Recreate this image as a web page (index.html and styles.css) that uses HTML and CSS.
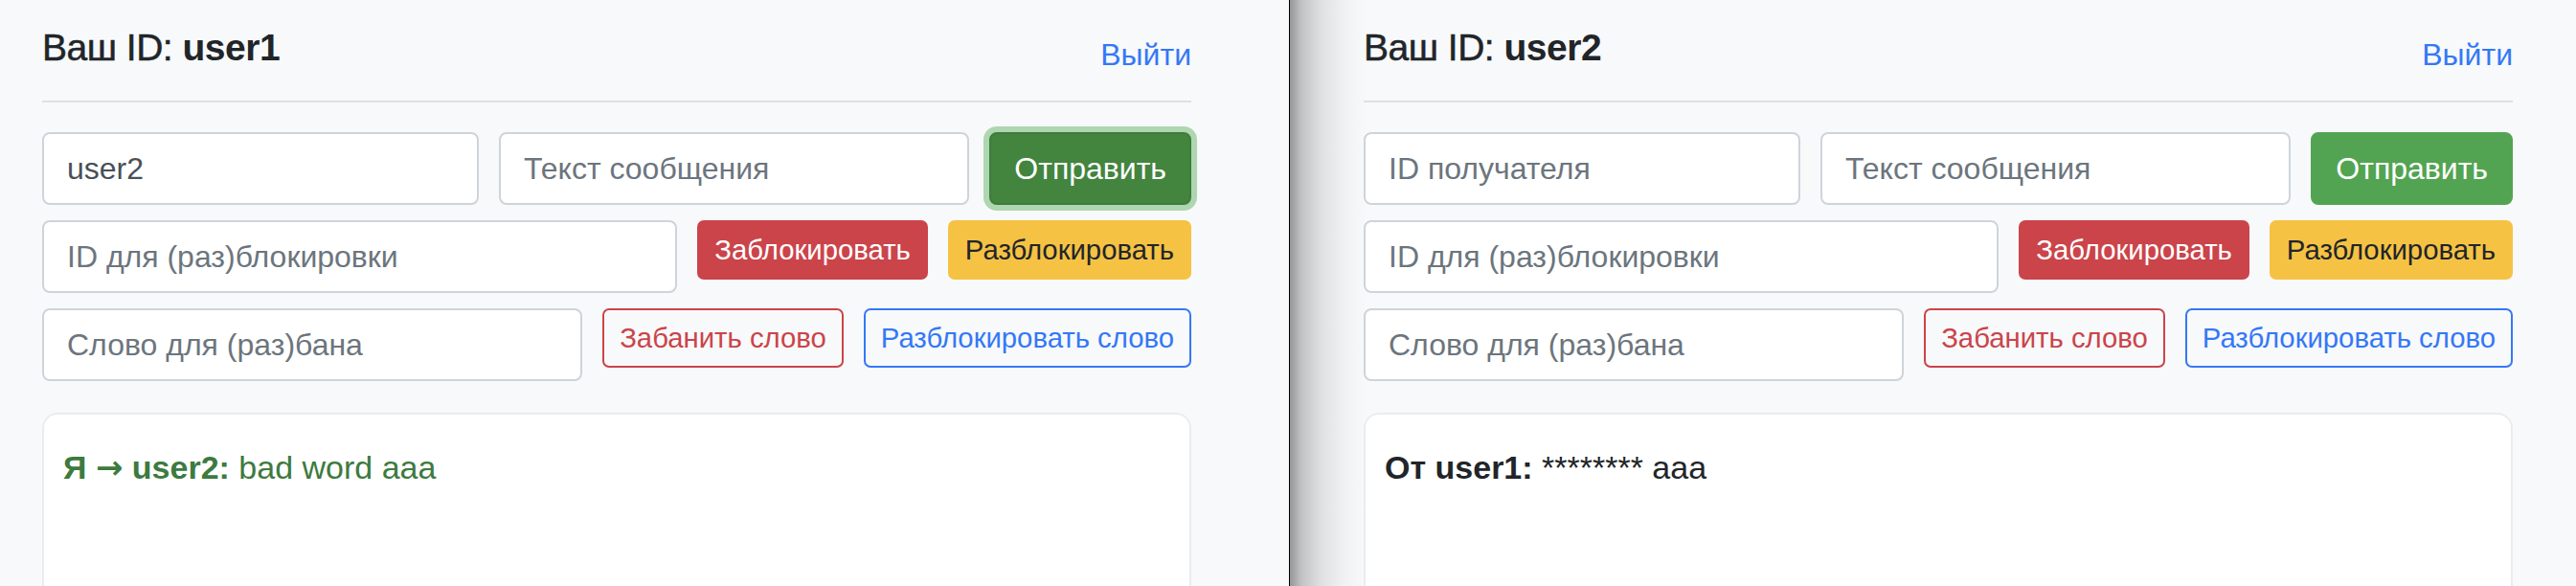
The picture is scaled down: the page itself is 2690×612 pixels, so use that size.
FILE: index.html
```html
<!DOCTYPE html>
<html lang="ru">
<head>
<meta charset="utf-8">
<title>Чат</title>
<link rel="stylesheet" href="styles.css">
</head>
<body>
<div class="screen">
  <section class="win win-left">
    <div class="content">
      <header class="topbar">
        <h4 class="title">Ваш ID: <b>user1</b></h4>
        <a class="logout" href="#">Выйти</a>
      </header>
      <hr class="sep">
      <div class="row row-send">
        <input class="field f-recipient" type="text" value="user2">
        <input class="field f-text" type="text" placeholder="Текст сообщения">
        <button class="btn btn-success is-focused" type="button">Отправить</button>
      </div>
      <div class="row">
        <input class="field f-grow" type="text" placeholder="ID для (раз)блокировки">
        <button class="btn btn-sm btn-danger" type="button">Заблокировать</button>
        <button class="btn btn-sm btn-warning" type="button">Разблокировать</button>
      </div>
      <div class="row">
        <input class="field f-grow" type="text" placeholder="Слово для (раз)бана">
        <button class="btn btn-sm btn-outline-danger" type="button">Забанить слово</button>
        <button class="btn btn-sm btn-outline-primary" type="button">Разблокировать слово</button>
      </div>
      <div class="messages">
        <p class="msg msg-out"><b>Я <span class="arrow">→</span> user2:</b> bad word aaa</p>
      </div>
    </div>
  </section>
  <section class="win win-right">
    <div class="win-shadow"></div>
    <div class="content">
      <header class="topbar">
        <h4 class="title">Ваш ID: <b>user2</b></h4>
        <a class="logout" href="#">Выйти</a>
      </header>
      <hr class="sep">
      <div class="row row-send">
        <input class="field f-recipient" type="text" placeholder="ID получателя">
        <input class="field f-text" type="text" placeholder="Текст сообщения">
        <button class="btn btn-success" type="button">Отправить</button>
      </div>
      <div class="row">
        <input class="field f-grow" type="text" placeholder="ID для (раз)блокировки">
        <button class="btn btn-sm btn-danger" type="button">Заблокировать</button>
        <button class="btn btn-sm btn-warning" type="button">Разблокировать</button>
      </div>
      <div class="row">
        <input class="field f-grow" type="text" placeholder="Слово для (раз)бана">
        <button class="btn btn-sm btn-outline-danger" type="button">Забанить слово</button>
        <button class="btn btn-sm btn-outline-primary" type="button">Разблокировать слово</button>
      </div>
      <div class="messages">
        <p class="msg msg-in"><b>От user1:</b> ******** aaa</p>
      </div>
    </div>
  </section>
</div>
</body>
</html>
```
FILE: styles.css
```css
html, body {
  margin: 0;
  padding: 0;
  height: 612px;
  overflow: hidden;
  background: #f8f9fa;
}

body {
  font-family: "Liberation Sans", Arial, Helvetica, sans-serif;
  color: #212529;
}

.screen {
  display: flex;
  width: 2690px;
  height: 612px;
}

.win {
  position: relative;
  height: 612px;
  background: #f8f9fa;
  overflow: hidden;
}

.win-left {
  width: 1346px;
  border-right: 1px solid #000;
  padding-left: 44px;
  box-sizing: border-box;
  flex: 0 0 1347px;
}

.win-right {
  flex: 1 1 auto;
  padding-left: 77px;
}

.win-shadow {
  position: absolute;
  left: 0;
  top: 0;
  bottom: 0;
  width: 80px;
  background: linear-gradient(to right,
    rgba(0, 0, 0, 0.40) 0px,
    rgba(0, 0, 0, 0.22) 12px,
    rgba(0, 0, 0, 0.10) 32px,
    rgba(0, 0, 0, 0.03) 56px,
    rgba(0, 0, 0, 0) 80px);
  pointer-events: none;
}

.content {
  width: 1200px;
  padding-top: 26px;
}

.topbar {
  display: flex;
  justify-content: space-between;
  align-items: flex-start;
}

.title {
  margin: 0;
  font-size: 39px;
  line-height: 47px;
  font-weight: 400;
  letter-spacing: -0.5px;
  color: #212529;
  -webkit-text-stroke: 0.5px #212529;
}

.title b {
  font-weight: 700;
  -webkit-text-stroke: 0;
}

.logout {
  padding-top: 7px;
  font-size: 32px;
  line-height: 48px;
  color: #3478f6;
  text-decoration: none;
}

.sep {
  margin: 24px 0 31px;
  border: 0;
  border-top: 2px solid #dfe0e3;
  height: 0;
}

.row {
  display: flex;
  align-items: flex-start;
  gap: 21px;
  margin-bottom: 16px;
}

.row-send {
  align-items: stretch;
}

.field {
  box-sizing: border-box;
  height: 76px;
  min-width: 0;
  margin: 0;
  padding: 12px 24px;
  font-family: inherit;
  font-size: 32px;
  line-height: 48px;
  color: #495057;
  background: #fff;
  border: 2px solid #ced4da;
  border-radius: 8px;
  outline: none;
}

.field::placeholder {
  color: #6c757d;
  opacity: 1;
}

.f-recipient {
  flex: 0 0 456px;
}

.f-text {
  flex: 1 1 0;
}

.f-grow {
  flex: 1 1 0;
}

.btn {
  box-sizing: border-box;
  margin: 0;
  padding: 12px 24px;
  font-family: inherit;
  font-size: 32px;
  line-height: 48px;
  border: 2px solid transparent;
  border-radius: 8px;
  white-space: nowrap;
  cursor: pointer;
  flex: 0 0 auto;
}

.btn-sm {
  padding: 8px 16px;
  font-size: 29.3px;
  line-height: 42px;
  border-radius: 7px;
}

.btn-success {
  background: #53a452;
  border-color: #53a452;
  color: #fff;
}

.btn-success.is-focused {
  background: #43843f;
  border-color: #3e7c3a;
  box-shadow: 0 0 0 6px #aed6b1;
}

.btn-danger {
  background: #cb444a;
  border-color: #cb444a;
  color: #fff;
}

.btn-warning {
  background: #f6c244;
  border-color: #f6c244;
  color: #212529;
}

.btn-outline-danger {
  background: transparent;
  border-color: #cb444a;
  color: #cb444a;
}

.btn-outline-primary {
  background: transparent;
  border-color: #3478f6;
  color: #3478f6;
}

.messages {
  margin-top: 33px;
  height: 400px;
  box-sizing: border-box;
  padding: 30px 20px;
  background: #fff;
  border: 2px solid #ebecee;
  border-radius: 16px;
}

.msg {
  margin: 0;
  font-size: 34px;
  line-height: 51px;
}

.msg b {
  font-weight: 700;
}

.arrow {
  font-family: "DejaVu Sans", sans-serif;
  font-weight: 700;
  font-size: 34px;
  line-height: 1;
}

.msg-out {
  color: #3d7a40;
}

.msg-in {
  color: #212529;
}
```
